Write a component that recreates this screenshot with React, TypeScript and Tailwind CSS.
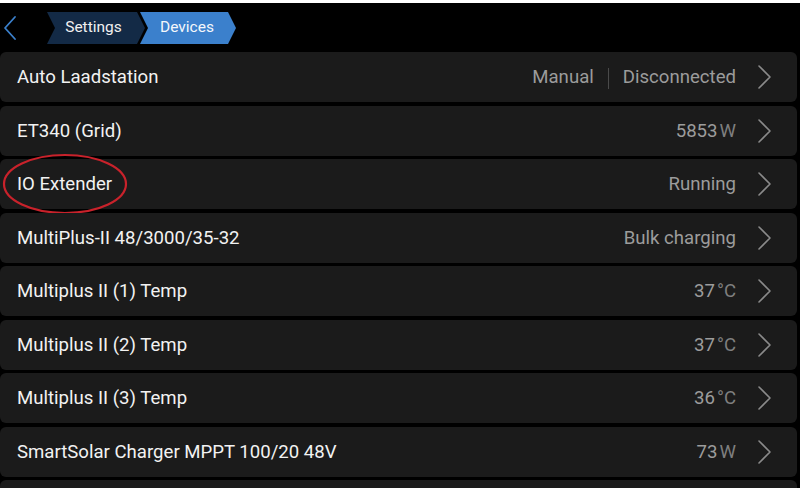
import React from "react";

type Row = {
  name: string;
  value?: string;
  unit?: string;
  mode?: string;
  circled?: boolean;
};

const ROWS: Row[] = [
  { name: "Auto Laadstation", mode: "Manual", value: "Disconnected" },
  { name: "ET340 (Grid)", value: "5853", unit: "W" },
  { name: "IO Extender", value: "Running", circled: true },
  { name: "MultiPlus-II 48/3000/35-32", value: "Bulk charging" },
  { name: "Multiplus II (1) Temp", value: "37", unit: "°C" },
  { name: "Multiplus II (2) Temp", value: "37", unit: "°C" },
  { name: "Multiplus II (3) Temp", value: "36", unit: "°C" },
  { name: "SmartSolar Charger MPPT 100/20 48V", value: "73", unit: "W" },
  { name: "" },
];

const Chevron: React.FC<{ className?: string }> = ({ className }) => (
  <svg width="16" height="26" viewBox="0 0 16 26" className={className} fill="none">
    <path d="M3 2 L14 13 L3 24" stroke="currentColor" strokeWidth="1.6" strokeLinecap="round" strokeLinejoin="round" />
  </svg>
);

const DeviceRow: React.FC<{ row: Row }> = ({ row }) => (
  <div className="relative flex items-center h-[50px] w-[797px] shrink-0 rounded-[6px] bg-[#1b1b1b] pl-[17px] pr-[25px] pt-[2px]">
    <span className="flex-1 text-[18.6px] text-[#f2f2f2]">{row.name}</span>
    {row.mode && (
      <>
        <span className="text-[18.6px] text-[#9c9c9c]">{row.mode}</span>
        <span className="mx-[14px] h-[21px] w-px bg-[#4a4a4a]" />
      </>
    )}
    {row.value && (
      <span className="text-[18.6px] text-[#9c9c9c]">
        {row.value}
        {row.unit && <span className="ml-[2px] text-[#7f7f7f]">{row.unit}</span>}
      </span>
    )}
    {row.name && <Chevron className="ml-[20px] -mt-[2px] text-[#8a8a8a]" />}
    {row.circled && (
      <svg className="absolute left-[2px] top-[-6px]" width="126" height="62" viewBox="0 0 126 62" fill="none">
        <ellipse cx="63" cy="31" rx="61" ry="29" stroke="#c9222b" strokeWidth="2.2" />
      </svg>
    )}
  </div>
);

const App: React.FC = () => {
  return (
    <div className="w-[800px] h-[488px] overflow-hidden bg-black font-['Roboto','Liberation_Sans',sans-serif]">
      <div className="h-[3px] bg-white" />
      {/* Header */}
      <div className="flex items-center h-[46px] pl-[3px] pt-[4px]">
        <svg width="14" height="26" viewBox="0 0 14 26" fill="none" className="text-[#3b80cc]">
          <path d="M12 2 L2 13 L12 24" stroke="currentColor" strokeWidth="1.8" strokeLinecap="round" strokeLinejoin="round" />
        </svg>
        <div className="ml-[30px] flex items-center">
          <div className="flex h-[32px] w-[98px] items-center justify-center pr-[5px] bg-[#132a46] text-[15.5px] text-[#f0f0f0] [clip-path:polygon(0_0,90px_0,98px_50%,90px_100%,0_100%,8px_50%)]">
            Settings
          </div>
          <div className="-ml-[5px] flex h-[32px] w-[96px] items-center justify-center pr-[2px] bg-[#3b80cc] text-[15.5px] text-[#f4f7fb] [clip-path:polygon(0_0,88px_0,96px_50%,88px_100%,0_100%,8px_50%)]">
            Devices
          </div>
        </div>
      </div>
      {/* Rows */}
      <div className="mt-[3px] flex flex-col gap-[3.5px]">
        {ROWS.map((row, i) => (
          <DeviceRow key={i} row={row} />
        ))}
      </div>
    </div>
  );
};

export default App;
